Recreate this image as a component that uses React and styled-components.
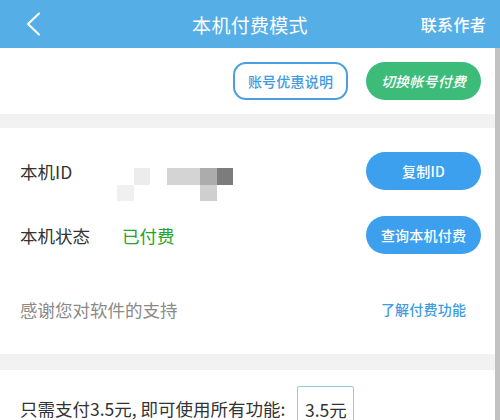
import React from "react";
import styled, { createGlobalStyle } from "styled-components";

const Global = createGlobalStyle`
  html, body { margin: 0; padding: 0; background: #ffffff; }
  body {
    width: 500px; height: 420px; overflow: hidden;
    font-family: "Noto Sans CJK SC", "Noto Sans", sans-serif;
    color: #333333;
  }
  * { box-sizing: border-box; }
`;

const Page = styled.div`
  width: 500px;
  height: 420px;
  display: flex;
  flex-direction: column;
  overflow: hidden;
`;

const Header = styled.header`
  height: 48px;
  flex: none;
  background: #56aee6;
  display: grid;
  grid-template-columns: 1fr auto 1fr;
  align-items: center;
  padding: 0 14px;
  color: #ffffff;
`;

const BackButton = styled.button`
  justify-self: start;
  margin-left: 12px;
  padding: 0;
  border: 0;
  background: none;
  display: flex;
  align-items: center;
`;

const Title = styled.h1`
  margin: 0;
  font-size: 19px;
  font-weight: 400;
  letter-spacing: 0.3px;
  line-height: 1;
`;

const HeaderLink = styled.span`
  justify-self: end;
  font-size: 16px;
  font-weight: 500;
  letter-spacing: 0.3px;
`;

const Body = styled.div`
  flex: 1;
  display: flex;
  min-height: 0;
`;

const Main = styled.main`
  flex: 1;
  display: flex;
  flex-direction: column;
  background: #f2f2f2;
`;

const ScrollTrack = styled.div`
  width: 5px;
  flex: none;
  background: #c2c2c2;
`;

const Section = styled.section`
  background: #ffffff;
  display: flex;
  flex-direction: column;
  padding: ${(p) => p.$pad || "0"};
  flex: ${(p) => (p.$grow ? 1 : "none")};
`;

const Separator = styled.div`
  height: ${(p) => p.$h || 14}px;
  flex: none;
  background: #f2f2f2;
`;

const Actions = styled.div`
  display: flex;
  justify-content: flex-end;
  gap: 18px;
  padding: 14px 14px 14px 0;
`;

const PillButton = styled.button`
  width: 115px;
  height: 38px;
  border-radius: ${(p) => p.$radius || 19}px;
  font-family: inherit;
  font-size: 14px;
  font-weight: 500;
  letter-spacing: 0.2px;
  display: flex;
  align-items: center;
  justify-content: center;
  padding: 0;
  cursor: pointer;
  border: ${(p) => (p.$variant === "outline" ? "2px solid #4a9fe0" : "0")};
  background: ${(p) =>
    p.$variant === "outline"
      ? "#ffffff"
      : p.$variant === "green"
      ? "#3dbc79"
      : p.$variant === "text"
      ? "transparent"
      : "#3ca0ee"};
  color: ${(p) =>
    p.$variant === "outline" || p.$variant === "text" ? "#3d9be0" : "#ffffff"};
  font-style: ${(p) => (p.$italic ? "italic" : "normal")};
`;

const Row = styled.div`
  display: flex;
  align-items: center;
  height: 38px;
  padding: 0 14px 0 20px;
  margin-top: ${(p) => p.$mt || 0}px;
`;

const Label = styled.span`
  width: 97px;
  flex: none;
  font-size: 17.5px;
  color: #333333;
`;

const Value = styled.span`
  flex: 1;
  font-size: 17.5px;
  color: ${(p) => p.$color || "#333333"};
  margin-left: ${(p) => p.$ml || 0}px;
`;

const Note = styled.span`
  flex: 1;
  font-size: 17.5px;
  color: #8a8a8a;
`;

const Mosaic = styled.div`
  align-self: flex-start;
  margin-top: 16px;
  display: grid;
  grid-template-columns: repeat(7, 16.6px);
  grid-template-rows: repeat(2, 16.6px);
  margin-right: auto;
`;

const Cell = styled.div`
  background: ${(p) => p.$c};
`;

const PriceRow = styled.div`
  display: flex;
  align-items: flex-start;
  padding: 16px 0 0 20px;
`;

const PriceText = styled.span`
  font-size: 17.5px;
  color: #333333;
  margin-top: 10px;
  white-space: pre;
`;

const PriceBox = styled.div`
  margin-left: 12px;
  width: 57px;
  height: 46px;
  flex: none;
  border: 1px solid #8ccbe0;
  border-radius: 2px;
  display: flex;
  align-items: center;
  justify-content: center;
  font-size: 17.5px;
  color: #333333;
`;

const mosaicColors = [
  "#ffffff", "#ececec", "#ffffff", "#d4d4d4", "#d4d4d4", "#acacac", "#7c7c7c",
  "#f0f0f0", "#ffffff", "#ffffff", "#ffffff", "#ffffff", "#cfcfcf", "#ffffff",
];

export default function App() {
  return (
    <>
      <Global />
      <Page>
        <Header>
          <BackButton aria-label="返回">
            <svg width="16" height="24" viewBox="0 0 16 24" fill="none">
              <path d="M13 1.5 L2 12 L13 22.5" stroke="#ffffff" strokeWidth="2" strokeLinecap="round" strokeLinejoin="round" />
            </svg>
          </BackButton>
          <Title>本机付费模式</Title>
          <HeaderLink>联系作者</HeaderLink>
        </Header>
        <Body>
          <Main>
            <Section>
              <Actions>
                <PillButton $variant="outline" $radius={13}>账号优惠说明</PillButton>
                <PillButton $variant="green" $italic>切换帐号付费</PillButton>
              </Actions>
            </Section>
            <Separator $h={14} />
            <Section $pad="24px 0 26px 0">
              <Row>
                <Label>本机ID</Label>
                <Mosaic>
                  {mosaicColors.map((c, i) => (
                    <Cell key={i} $c={c} />
                  ))}
                </Mosaic>
                <PillButton>复制ID</PillButton>
              </Row>
              <Row $mt={26}>
                <Label>本机状态</Label>
                <Value $color="#25a32a" $ml={5}>已付费</Value>
                <PillButton>查询本机付费</PillButton>
              </Row>
              <Row $mt={36}>
                <Note>感谢您对软件的支持</Note>
                <PillButton $variant="text">了解付费功能</PillButton>
              </Row>
            </Section>
            <Separator $h={16} />
            <Section $grow>
              <PriceRow>
                <PriceText>只需支付3.5元, 即可使用所有功能:</PriceText>
                <PriceBox>3.5元</PriceBox>
              </PriceRow>
            </Section>
          </Main>
          <ScrollTrack />
        </Body>
      </Page>
    </>
  );
}
